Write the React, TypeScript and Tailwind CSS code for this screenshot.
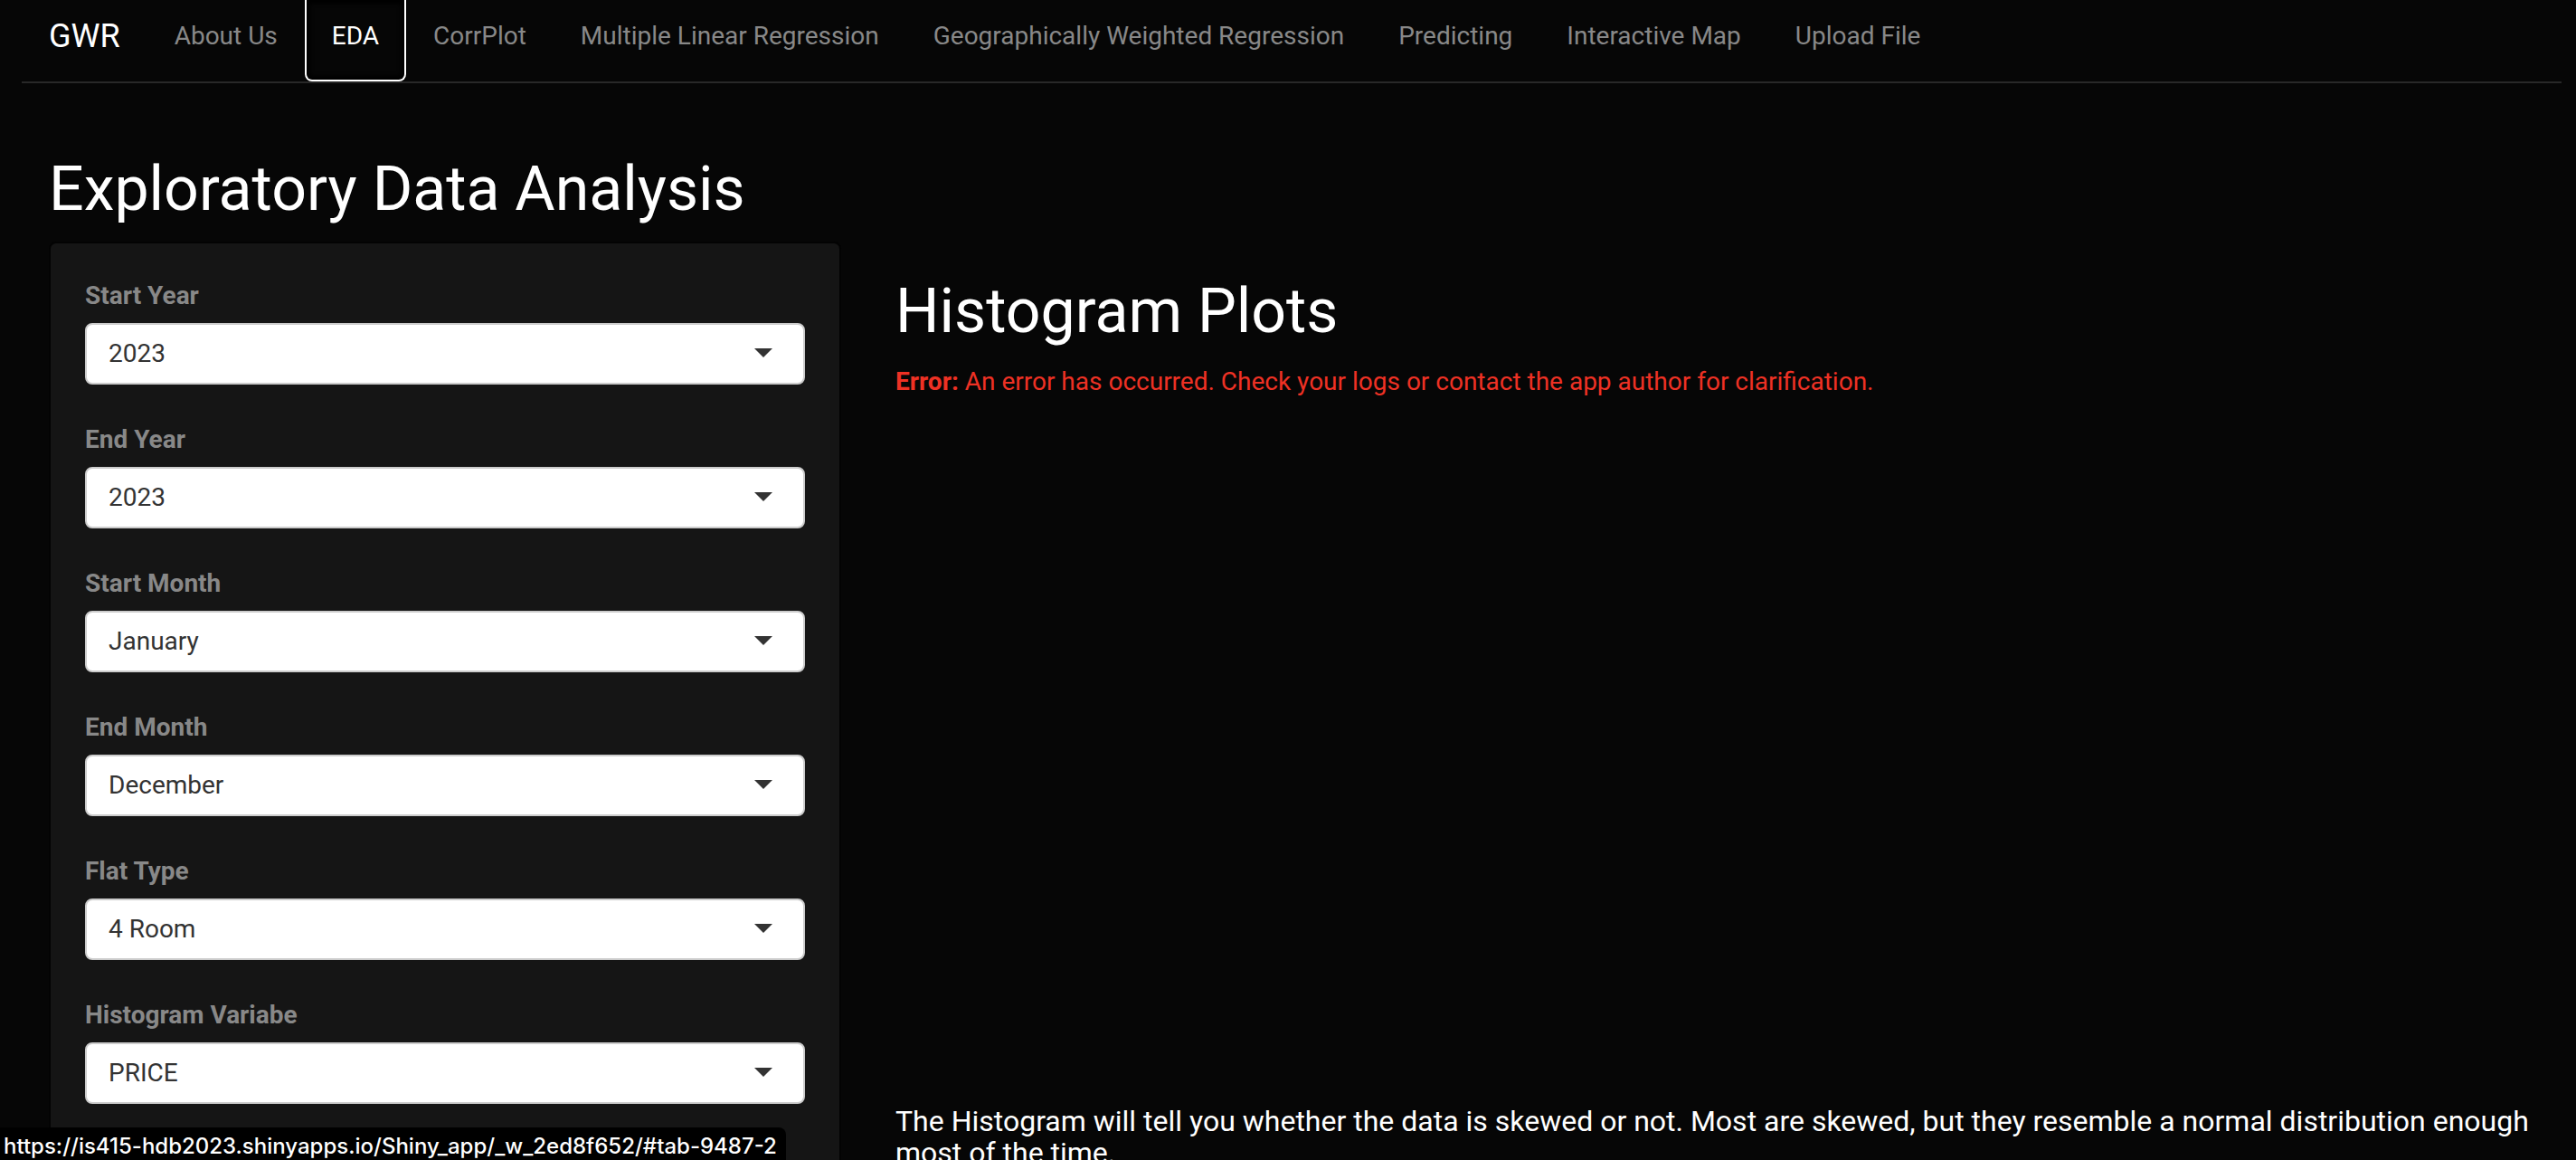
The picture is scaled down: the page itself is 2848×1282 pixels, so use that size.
import React from "react";

const tabs = [
  "About Us",
  "EDA",
  "CorrPlot",
  "Multiple Linear Regression",
  "Geographically Weighted Regression",
  "Predicting",
  "Interactive Map",
  "Upload File",
];

const fields = [
  { id: "start-year", label: "Start Year", options: ["2023", "2022", "2021"] },
  { id: "end-year", label: "End Year", options: ["2023", "2022", "2021"] },
  { id: "start-month", label: "Start Month", options: ["January", "December"] },
  { id: "end-month", label: "End Month", options: ["December", "January"] },
  { id: "flat-type", label: "Flat Type", options: ["4 Room", "3 Room", "5 Room"] },
  { id: "histogram-variable", label: "Histogram Variabe", options: ["PRICE"] },
];

function Navbar() {
  return (
    <nav className="mb-20 mr-4 ml-6 flex items-start border-b-2 border-[#282828]">
      <a href="#" className="px-[30px] pt-5 text-[36px] leading-10 text-white">
        GWR
      </a>
      <ul className="flex">
        {tabs.map((tab) => (
          <li key={tab}>
            <a
              href={"#" + tab.toLowerCase().replaceAll(" ", "-")}
              aria-current={tab === "EDA" ? "page" : undefined}
              className={
                tab === "EDA"
                  ? "block rounded-b-lg border-2 border-t-0 border-white px-7 pt-5 pb-7 text-white shadow-[inset_0_0_4px_4px_#000000]"
                  : "block border-2 border-t-0 border-transparent px-7 pt-5 pb-7 text-[#888888]"
              }
            >
              {tab}
            </a>
          </li>
        ))}
      </ul>
    </nav>
  );
}

function SelectField({ id, label, options }: { id: string; label: string; options: string[] }) {
  return (
    <div className="flex flex-col gap-2.5">
      <label htmlFor={id} className="font-bold text-[#888888]">
        {label}
      </label>
      <div className="relative">
        <select
          id={id}
          className="block h-[68px] w-full appearance-none rounded-lg border-2 border-[#cccccc] bg-white px-6 text-[#333333]"
        >
          {options.map((option) => (
            <option key={option}>{option}</option>
          ))}
        </select>
        <svg
          viewBox="0 0 20 10"
          aria-hidden="true"
          className="pointer-events-none absolute top-7 right-9 h-2.5 w-5 fill-[#333333]"
        >
          <path d="M0 0h20L10 10z" />
        </svg>
      </div>
    </div>
  );
}

export default function App() {
  return (
    <div className="h-screen overflow-hidden bg-[#060606] font-['Roboto',sans-serif] text-[28px] leading-10 text-[#888888]">
      <Navbar />
      <main className="mr-4 ml-6">
        <h1 className="mb-5 px-[30px] text-[68px] leading-[75px] text-white">Exploratory Data Analysis</h1>
        <div className="grid grid-cols-3">
          <div className="px-[30px]">
            <form className="flex flex-col gap-[41px] rounded-lg border-2 border-[#030303] bg-[#151515] px-[38px] pt-[38px] pb-20">
              {fields.map((field) => (
                <SelectField key={field.id} {...field} />
              ))}
            </form>
          </div>
          <section className="col-span-2 px-[30px] pt-10">
            <h2 className="mb-5 text-[68px] leading-[75px] text-white">Histogram Plots</h2>
            <div role="alert" className="mb-5 h-[800px] text-[#ee3124]">
              <strong className="font-bold">Error:</strong> An error has occurred. Check your logs or contact the app
              author for clarification.
            </div>
            <p className="text-[32px] leading-[35px] text-white">
              The Histogram will tell you whether the data is skewed or not. Most are skewed, but they resemble a normal
              distribution enough most of the time.
            </p>
          </section>
        </div>
      </main>
      <div className="fixed bottom-0 left-0 rounded-tr-lg bg-black pt-1.5 pr-2.5 pl-1 font-['Inter',sans-serif] text-[24px] leading-[30px] font-medium text-white">
        https://is415-hdb2023.shinyapps.io/Shiny_app/_w_2ed8f652/#tab-9487-2
      </div>
    </div>
  );
}
